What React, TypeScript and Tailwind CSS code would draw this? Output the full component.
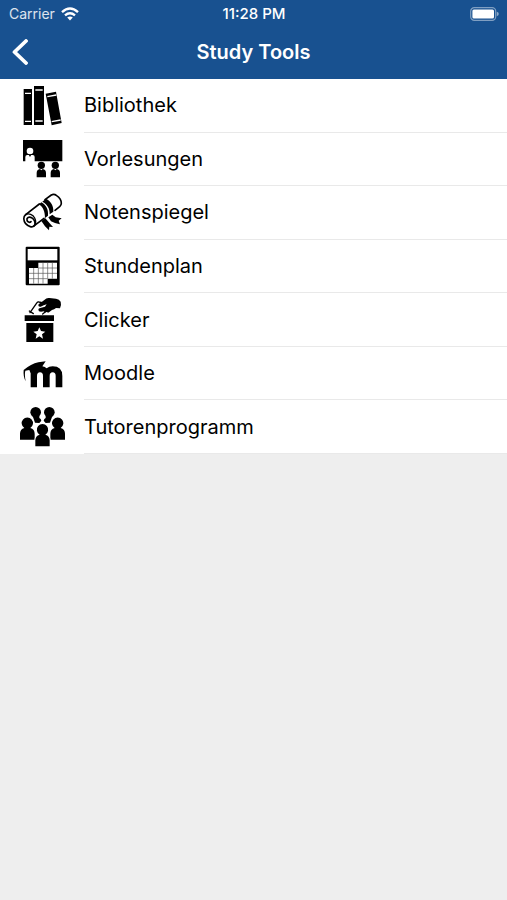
import React from 'react';

const BooksIcon = () => (
  <svg viewBox="24 9 144 144" className="h-12 w-12" aria-hidden="true">
    <path d="M41 30h25v108H41zM72 21h30v117H72zM107 44l31-6 17 94-30 7z" />
    <path
      d="M45 43h18M45 127h18M76 33h22M76 126h22M112 53l27-5M125 128l27-5"
      stroke="#fff"
      strokeWidth="4"
    />
  </svg>
);

const LectureIcon = () => (
  <svg viewBox="24 9 144 144" className="h-12 w-12" aria-hidden="true">
    <path d="M39 24h118v64H39z" />
    <g fill="#fff">
      <circle cx="60" cy="57" r="10" />
      <path d="M46 90V75q0-6 6-6h16q6 0 6 6v15z" />
    </g>
    <path d="m56 68 4 7 4-7z" />
    <circle cx="94" cy="100" r="11" />
    <circle cx="136" cy="100" r="11" />
    <path d="M80 136v-13q0-10 10-12l4 4 4-4q10 2 10 12v13zM122 136v-13q0-10 10-12l4 4 4-4q10 2 10 12v13z" />
  </svg>
);

const DiplomaIcon = () => (
  <svg viewBox="24 8 144 144" className="h-12 w-12" aria-hidden="true">
    <g fill="none" stroke="#000" strokeWidth="5" strokeLinecap="round" strokeLinejoin="round">
      <path d="M47 85 88 53M105 40l19-14q8-4 16 2c9 6 14 16 14 23q0 6-5 10l-14 11M102 96l-29 22" />
      <path d="M47 85c-8 6-7 18 0 27 8 9 20 13 26 6 5-7 1-19-8-24-8-4-16 0-14 7 1 6 8 9 12 5" />
      <path d="M47 85c9-6 22 0 27 10 4 8 4 17-1 23" strokeWidth="4" />
    </g>
    <path d="M87 54l7-6c14 8 22 21 20 40l-9 7c0-18-5-32-18-41z" />
    <path d="M97 46l11-9c15 8 23 21 22 39l-11 8c1-17-7-30-22-38z" />
    <path d="M94 104l12-8 13 15 10 11-11-1-1 11-12-12zM115 93l12-8 10 8 18 3-9 7 4 11-15-4-12-5z" />
  </svg>
);

const CalendarIcon = () => (
  <svg viewBox="24 6 144 144" className="h-12 w-12" aria-hidden="true">
    <rect x="47" y="20" width="102" height="116" rx="3" />
    <path d="M53 27h89v34H53z" fill="#fff" />
    <path d="M85 68h56v48h-28v15H57V84h28z" fill="#fff" />
    <path
      d="M71 84v47M85 84v47M99 68v63M113 68v48M127 68v48M85 84h56M57 100h84M57 116h56"
      stroke="#555"
      strokeWidth="2"
    />
  </svg>
);

const VoteIcon = () => (
  <svg viewBox="24 5 144 144" className="h-12 w-12" aria-hidden="true">
    <path d="M44 63h88v17H44zM49 86h81v57H49z" />
    <path d="m88 99 5 11 13 2-10 8 3 13-11-7-11 7 3-13-10-8 13-2z" fill="#fff" />
    <path
      d="M60 55 81 25q2-3 6-2l18 4M58 50l12 8M112 48l-14 11"
      fill="none"
      stroke="#000"
      strokeWidth="4"
      strokeLinecap="round"
    />
    <path d="M104 16q5-6 14-5l20 2q10 2 14 9 3 10-2 20l-12-1q-5 5-12 6l-8 6q-4 3-7 0l-4 1q-4 1-5-3l-9 1q-8 0-8-6 0-4 6-5l14-4 5-7-9 3-9 4q-7 1-7-4 0-4 5-6z" />
  </svg>
);

const MoodleIcon = () => (
  <svg viewBox="24 3 144 144" className="h-12 w-12" aria-hidden="true">
    <path d="M62 115V68l16-12q8-4 16-4 10 0 16 6 7-6 18-6 29 0 29 29v34h-20V81q0-11-9-11t-9 11v34H99V81q0-11-9-11t-9 11v34z" />
    <path d="M41 63q22-18 44-23l22-3-9 13q-1 4 0 8l-18 4-15 14q-5-6-7-13l-12 2q-3 12 1 32-8-15-6-34z" />
  </svg>
);

const GroupIcon = () => (
  <svg viewBox="24 7 144 144" className="h-12 w-12" aria-hidden="true">
    <circle cx="77" cy="35" r="16" />
    <circle cx="118" cy="35" r="16" />
    <path d="M68 46h20v6q5 2 6 8l-6 7-13-1zM127 46h-20v6q-5 2-6 8l6 7 13-1z" />
    <g stroke="#fff" strokeWidth="5" paintOrder="stroke">
      <path d="M30 117V99q0-13 13-17a17 17 0 1 1 18 0q13 4 13 17v18z" />
      <path d="M121 117V99q0-13 13-17a17 17 0 1 1 18 0q13 4 13 17v18z" />
      <path d="M76 137v-18q0-13 13-17a17 17 0 1 1 17 0q13 4 13 17v18z" />
    </g>
  </svg>
);

const tools = [
  { label: 'Bibliothek', Icon: BooksIcon },
  { label: 'Vorlesungen', Icon: LectureIcon },
  { label: 'Notenspiegel', Icon: DiplomaIcon },
  { label: 'Stundenplan', Icon: CalendarIcon },
  { label: 'Clicker', Icon: VoteIcon },
  { label: 'Moodle', Icon: MoodleIcon },
  { label: 'Tutorenprogramm', Icon: GroupIcon },
];

const StatusBar = () => (
  <div className="grid h-7 grid-cols-[1fr_auto_1fr] items-center pr-2 pl-[9px] leading-4">
    <div className="flex items-center gap-1.5 text-sm text-white/85">
      Carrier
      <svg viewBox="0 0 18 14" className="h-3.5 w-[18px]" fill="none" stroke="#fff" strokeWidth="2.4" aria-hidden="true">
        <path d="M1 5.2Q9-2 17 5.2M4 8.4q5-4.2 10 0" />
        <path d="M6.2 10.6q2.8-2.4 5.6 0L9 13.6z" fill="#fff" stroke="none" />
      </svg>
    </div>
    <span className="text-center text-[15px] font-medium">11:28 PM</span>
    <svg viewBox="0 0 29 14" className="h-3.5 w-[29px] justify-self-end" aria-hidden="true">
      <rect x="0.7" y="0.7" width="25" height="12.6" rx="3.6" fill="none" stroke="#fff" strokeOpacity="0.45" strokeWidth="1.2" />
      <rect x="2.4" y="2.4" width="21.6" height="9.2" rx="1.5" fill="#fff" />
      <path d="M26.8 4.8q2 .6 2 2.2t-2 2.2z" fill="#fff" fillOpacity="0.5" />
    </svg>
  </div>
);

function App() {
  return (
    <div className="min-h-screen bg-[#eeeeee] font-[Inter,sans-serif] text-black">
      <header className="bg-[#185190] pb-[3px] text-white">
        <StatusBar />
        <div className="grid h-12 grid-cols-[48px_1fr_48px] items-center">
          <button type="button" aria-label="Back" className="flex h-full items-center pl-3">
            <svg viewBox="0 0 16 26" className="h-[26px] w-4" fill="none" stroke="#fff" strokeWidth="3.8" strokeLinecap="round" strokeLinejoin="round" aria-hidden="true">
              <path d="M14 2 2.5 13 14 24" />
            </svg>
          </button>
          <h1 className="text-center text-xl font-semibold">Study Tools</h1>
        </div>
      </header>

      <ul className="grid h-[375px] auto-rows-fr bg-white">
        {tools.map(({ label, Icon }) => (
          <li key={label}>
            <a href="#" className="flex h-full items-stretch pl-[18px]">
              <span className="flex w-[66px] items-center">
                <Icon />
              </span>
              <span className="flex flex-1 items-center border-b border-[#e9e9e9] text-xl leading-6">
                {label}
              </span>
            </a>
          </li>
        ))}
      </ul>
    </div>
  );
}

export default App;
